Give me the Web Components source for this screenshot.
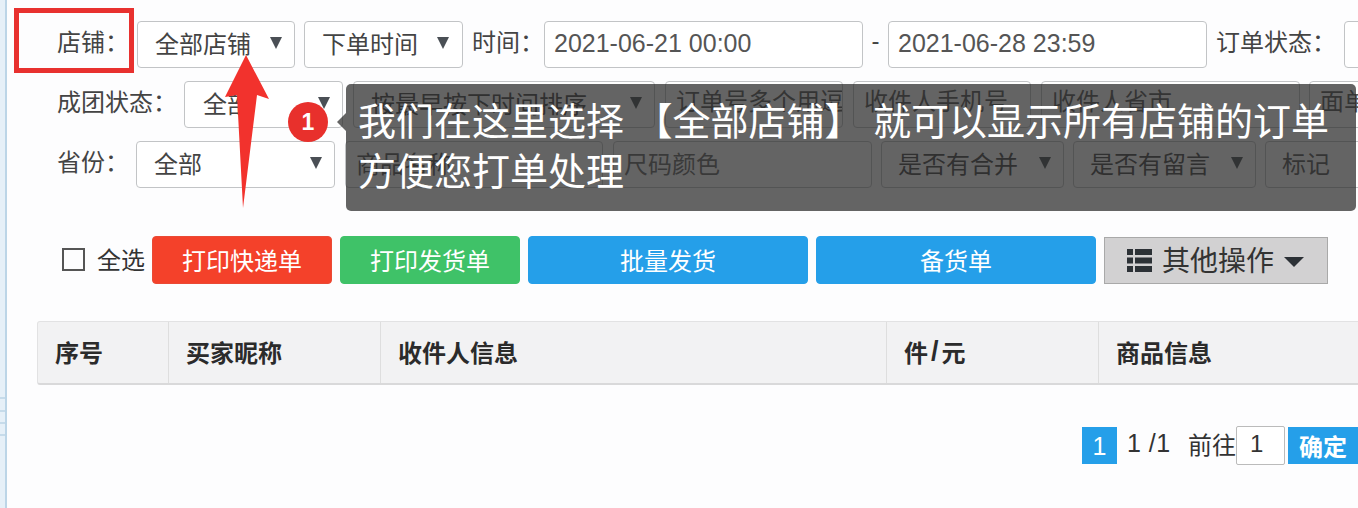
<!DOCTYPE html>
<html lang="zh">
<head>
<meta charset="utf-8">
<title>订单</title>
<style>
html, body { margin:0; height:100%; overflow:hidden; background:#fdfdfe; }
body { font-family:"Liberation Sans","Noto Sans CJK SC",sans-serif; color:#333; }
</style>
</head>
<body>
<order-page></order-page>

<template id="t-select">
<style>
:host { display:flex; align-items:center; justify-content:space-between; flex:none; box-sizing:border-box; height:47px; padding:0 12px 4px 17px; border:1px solid #c2c4c6; border-radius:4px; background:#fff; font-size:24px; color:#444; white-space:nowrap; }
i { width:0; height:0; border:6.5px solid transparent; border-top:12px solid #4a4f55; border-bottom:0; }
</style>
<slot></slot><i></i>
</template>

<template id="t-input">
<style>
:host { display:flex; align-items:center; flex:none; box-sizing:border-box; height:47px; padding:0 10px 4px; border:1px solid #c2c4c6; border-radius:4px; background:#fff; font-size:24px; color:#555; white-space:nowrap; overflow:hidden; }
</style>
<slot></slot>
</template>

<template id="t-button">
<style>
:host { display:flex; align-items:center; justify-content:center; flex:none; box-sizing:border-box; height:48px; padding-bottom:2px; border-radius:4px; background:var(--bg,#259fe9); border:1px solid var(--edge,#259fe9); color:#fff; font-size:24px; }
</style>
<slot></slot>
</template>

<template id="t-page">
<style>
:host { display:block; position:relative; width:1358px; height:508px; overflow:hidden; }
.edge { position:absolute; left:0; top:0; bottom:0; width:5px; background:#e6f0f8; border-right:2px solid #bcd5e7; }
.edge span { position:absolute; left:0; right:0; height:2px; background:#c6dbea; }
.content { padding:21px 0 0 57px; }
.row { display:flex; align-items:center; height:47px; white-space:nowrap; }
.row + .row { margin-top:13px; }
.lab { flex:none; font-size:24px; color:#444; padding-bottom:8px; }
.date { font-size:25px; padding:0 9px 2px; }
.up { padding-bottom:10px; }
.actions { display:flex; align-items:center; gap:8px; margin-top:48px; margin-left:5px; height:48px; white-space:nowrap; }
.check { width:23px; height:23px; box-sizing:border-box; border:2px solid #555; flex:none; margin-right:4px; margin-top:-1px; }
.all { font-size:24px; color:#333; margin-right:-1px; padding-bottom:4px; }
.more { display:flex; align-items:center; flex:none; box-sizing:border-box; width:224px; height:47px; padding:0 0 3px 22px; background:#d2d1d2; border:1px solid #a9a9a9; color:#333; font-size:28px; }
.more svg { margin:3px 10px 0 0; flex:none; }
.more b { width:0; height:0; margin:7px 0 0 10px; border:10px solid transparent; border-top:10px solid #2c3136; border-bottom:0; }
.thead { display:flex; margin:37px 0 0 -20px; height:64px; box-sizing:border-box; width:1340px; background:#f2f2f3; border:1px solid #e2e2e3; border-bottom:2px solid #d9d9da; border-radius:3px 0 0 3px; font-size:24px; font-weight:bold; color:#2b2b2b; }
.thead div { display:flex; align-items:center; box-sizing:border-box; flex:none; padding:0 0 3px 17px; border-right:1px solid #dedede; }
.thead i { font-style:normal; font-size:27px; line-height:1; margin:0 3px; }
.pager { display:flex; align-items:center; justify-content:flex-end; height:40px; margin-top:40px; font-size:24px; color:#333; white-space:nowrap; }
.cur { width:35px; height:37px; display:flex; align-items:center; justify-content:center; background:#259fe9; color:#fff; font-size:25px; padding-top:3px; box-sizing:border-box; margin-right:10px; }
.num { width:61px; font-size:25px; letter-spacing:.5px; padding-bottom:3px; }
.go { width:48px; padding-bottom:4px; }
.pin { display:flex; align-items:center; box-sizing:border-box; width:49px; height:39px; padding:0 0 2px 13px; margin-right:3px; background:#fff; border:1px solid #bbb; border-radius:2px; }
.ok { display:flex; align-items:center; justify-content:center; width:70px; height:37px; background:#259fe9; color:#fff; font-weight:bold; font-size:24px; }
.mark { position:absolute; left:14px; top:8px; width:120px; height:65px; box-sizing:border-box; border:5px solid #e8312f; }
.tip { position:absolute; left:346px; top:84px; width:1010px; height:127px; box-sizing:border-box; padding:13px 0 0 12px; background:rgba(40,40,40,.72); border-radius:5px; color:#fff; font-size:38px; line-height:50px; }
.tip::before { content:""; position:absolute; left:-9px; top:29px; border:9px solid transparent; border-left:0; border-right:9px solid rgba(40,40,40,.72); }
.badge { position:absolute; left:288px; top:102px; width:40px; height:40px; display:flex; align-items:center; justify-content:center; border-radius:50%; background:#e8302c; color:#fff; font-size:23px; font-weight:bold; }
.arrow { position:absolute; left:224px; top:54px; }
</style>
<div class="edge"><span style="top:397px"></span><span style="top:410px"></span><span style="top:422px"></span><span style="top:434px"></span></div>
<div class="content">
  <div class="row">
    <span class="lab" style="width:80px">店铺：</span>
    <o-select style="width:158px">全部店铺</o-select>
    <o-select style="width:159px;margin-left:9px;padding-right:13px">下单时间</o-select>
    <span class="lab" style="width:72px;margin-left:9px">时间：</span>
    <o-input class="date" style="width:319px">2021-06-21 00:00</o-input>
    <span class="lab" style="width:25px;text-align:center">-</span>
    <o-input class="date" style="width:319px">2021-06-28 23:59</o-input>
    <span class="lab" style="width:128px;margin-left:9px">订单状态：</span>
    <o-select style="width:160px"></o-select>
  </div>
  <div class="row">
    <span class="lab" style="width:127px">成团状态：</span>
    <o-select style="width:159px;padding-left:18px">全部</o-select>
    <o-select style="width:302px;margin-left:10px">按最早按下时间排序</o-select>
    <o-input class="up" style="width:178px;margin-left:10px">订单号多个用逗</o-input>
    <o-input class="up" style="width:178px;margin-left:10px">收件人手机号</o-input>
    <o-input class="up" style="width:259px;margin-left:10px">收件人省市</o-input>
    <o-input class="up" style="width:160px;margin-left:9px">面单</o-input>
  </div>
  <div class="row">
    <span class="lab" style="width:79px">省份：</span>
    <o-select style="width:199px">全部</o-select>
    <o-input style="width:258px;margin-left:10px">商品名称</o-input>
    <o-input style="width:259px;margin-left:10px;color:#666">尺码颜色</o-input>
    <o-select style="width:183px;margin-left:9px;padding-left:16px">是否有合并</o-select>
    <o-select style="width:183px;margin-left:9px;padding-left:16px">是否有留言</o-select>
    <o-input style="width:100px;margin-left:9px;padding-left:16px">标记</o-input>
  </div>
  <div class="actions">
    <span class="check"></span>
    <span class="all">全选</span>
    <o-button style="--bg:#f4412a;--edge:#ea4a35;width:180px">打印快递单</o-button>
    <o-button style="--bg:#3fc268;--edge:#3fc268;width:180px">打印发货单</o-button>
    <o-button style="width:280px">批量发货</o-button>
    <o-button style="width:280px">备货单</o-button>
    <div class="more">
      <svg width="25" height="25" viewBox="0 0 25 25" fill="#2c3136"><path d="M0 1h6v6H0zM8 1h17v6H8zM0 9.500h6v6H0zM8 9.500h17v6H8zM0 18h6v6H0zM8 18h17v6H8z"/></svg>
      其他操作<b></b>
    </div>
  </div>
  <div class="thead">
    <div style="width:131px">序号</div>
    <div style="width:212px">买家昵称</div>
    <div style="width:506px">收件人信息</div>
    <div style="width:212px">件<i>/</i>元</div>
    <div style="border:0">商品信息</div>
  </div>
  <div class="pager">
    <span class="cur">1</span>
    <span class="num">1 /1</span>
    <span class="go">前往</span>
    <span class="pin">1</span>
    <span class="ok">确定</span>
  </div>
</div>
<div class="mark"></div>
<div class="tip">我们在这里选择 【全部店铺】 就可以显示所有店铺的订单<br>方便您打单处理</div>
<div class="badge">1</div>
<svg class="arrow" width="46" height="156" viewBox="0 0 46 156"><path d="M22 1 45 45 33 41 19 154 13 41 1 43Z" fill="#f2322d"/></svg>
</template>

<script>
class OSelect extends HTMLElement {
  constructor() {
    super()
    const shadow = this.attachShadow({mode:"open"})
    shadow.append(document.getElementById("t-select").content.cloneNode(true))
  }
}
class OInput extends HTMLElement {
  constructor() {
    super()
    const shadow = this.attachShadow({mode:"open"})
    shadow.append(document.getElementById("t-input").content.cloneNode(true))
  }
}
class OButton extends HTMLElement {
  constructor() {
    super()
    const shadow = this.attachShadow({mode:"open"})
    shadow.append(document.getElementById("t-button").content.cloneNode(true))
  }
}
class OrderPage extends HTMLElement {
  constructor() {
    super()
    const shadow = this.attachShadow({mode:"open"})
    shadow.append(document.getElementById("t-page").content.cloneNode(true))
  }
}
customElements.define("o-select", OSelect)
customElements.define("o-input", OInput)
customElements.define("o-button", OButton)
customElements.define("order-page", OrderPage)
</script>
</body>
</html>
